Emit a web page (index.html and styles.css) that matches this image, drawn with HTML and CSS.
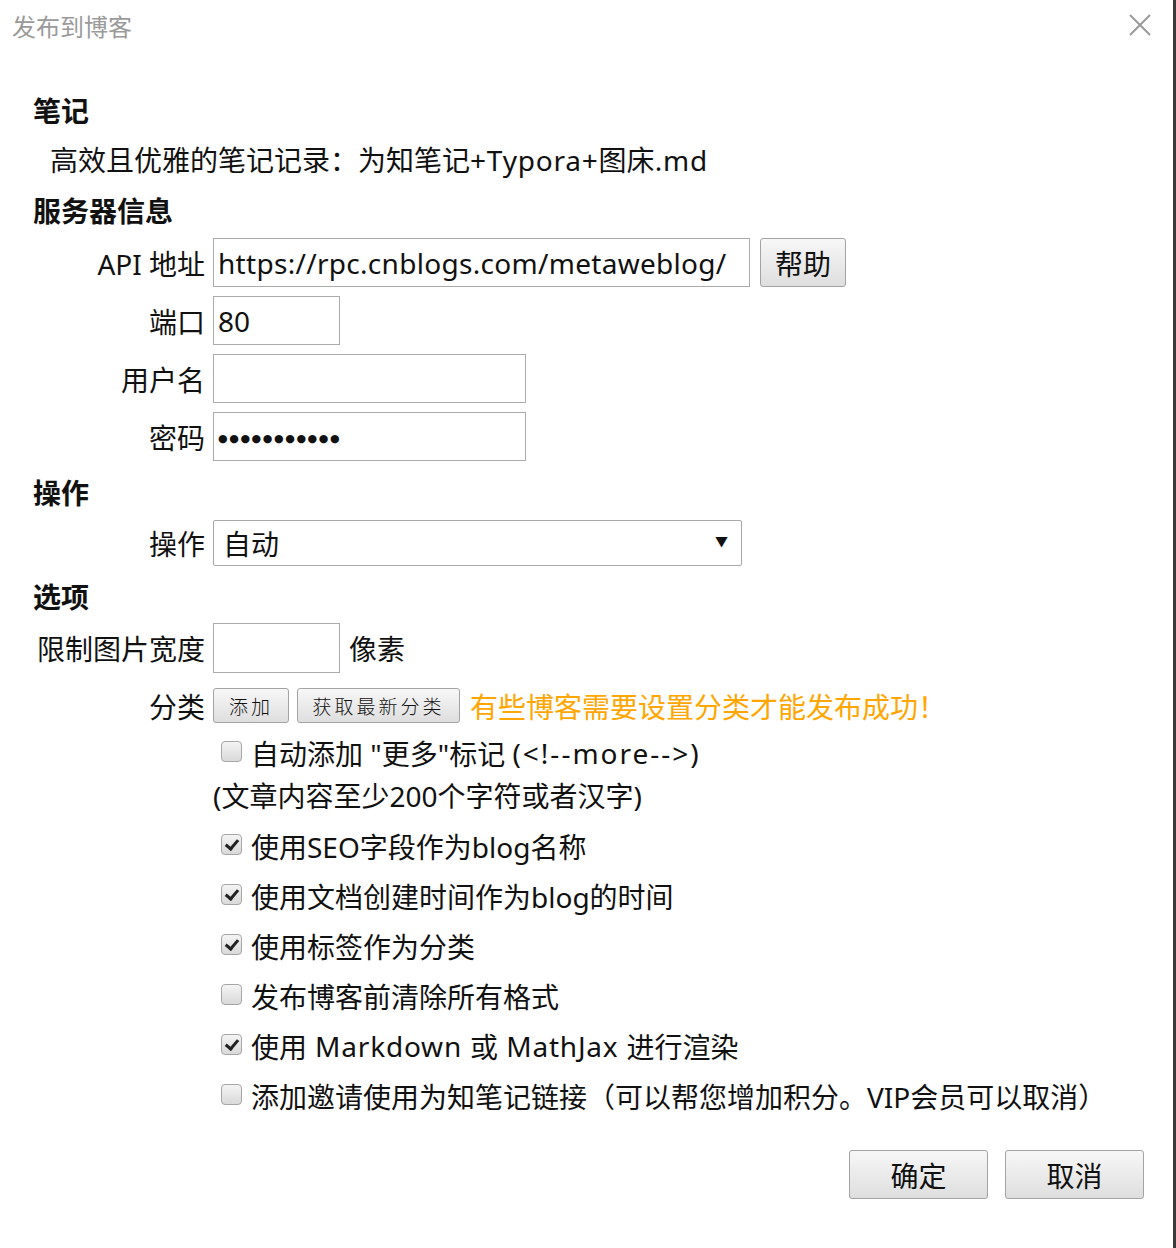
FILE: index.html
```html
<!DOCTYPE html>
<html>
<head>
  <meta charset="utf-8">
  <title>发布到博客</title>
  <link rel="stylesheet" href="styles.css">
</head>
<body>

  <div class="dialog">
    <div class="titlebar">
      <span class="title">发布到博客</span>
      <svg class="close" width="22" height="22" viewBox="0 0 22 22">
        <path d="M1 1L21 21M21 1L1 21" stroke="#999" stroke-width="2" fill="none"/>
      </svg>
    </div>

    <div class="content">
      <div class="section-title">笔记</div>
      <div class="note">高效且优雅的笔记记录：为知笔记<span class="en">+Typora+</span>图床<span class="en">.md</span></div>

      <div class="section-title">服务器信息</div>
      <div class="rows server">
        <div class="field">
          <label>API 地址</label>
          <input type="text" class="input url" value="https://rpc.cnblogs.com/metaweblog/">
          <button class="btn help">帮助</button>
        </div>
        <div class="field">
          <label>端口</label>
          <input type="text" class="input short" value="80">
        </div>
        <div class="field">
          <label>用户名</label>
          <input type="text" class="input mid" value="">
        </div>
        <div class="field">
          <label>密码</label>
          <input type="text" class="input mid pass" value="●●●●●●●●●●●">
        </div>
      </div>

      <div class="section-title op-title">操作</div>
      <div class="field select-row">
        <label>操作</label>
        <div class="select">
          <span>自动</span>
          <span class="arrow">▼</span>
        </div>
      </div>

      <div class="section-title opt-title">选项</div>
      <div class="field width-row">
        <label>限制图片宽度</label>
        <input type="text" class="input short tall" value="">
        <span class="unit">像素</span>
      </div>
      <div class="field cat-row">
        <label>分类</label>
        <button class="btn small add">添加</button>
        <button class="btn small fetch">获取最新分类</button>
        <span class="warn">有些博客需要设置分类才能发布成功！</span>
      </div>

      <div class="options">
        <div class="check first"><span class="box"></span>自动添加 "更多"标记 <span class="more">(&lt;!--more--&gt;)</span></div>
        <div class="hint">(文章内容至少200个字符或者汉字)</div>
        <div class="check"><span class="box on"></span>使用SEO字段作为blog名称</div>
        <div class="check"><span class="box on"></span>使用文档创建时间作为blog的时间</div>
        <div class="check"><span class="box on"></span>使用标签作为分类</div>
        <div class="check"><span class="box"></span>发布博客前清除所有格式</div>
        <div class="check"><span class="box on"></span>使用<span class="en"> Markdown </span>或<span class="en"> MathJax </span>进行渲染</div>
        <div class="check"><span class="box"></span>添加邀请使用为知笔记链接（可以帮您增加积分。VIP会员可以取消）</div>
      </div>

      <div class="footer">
        <button class="btn big">确定</button>
        <button class="btn big">取消</button>
      </div>
    </div>
  </div>

</body>
</html>
```

FILE: styles.css
```css
body {
  margin: 0;
  font-family: "Noto Sans", "Noto Sans CJK SC", sans-serif;
  color: #111;
  background: #fff;
}

.dialog {
  width: 1173px;
  height: 1248px;
  border-right: 3px solid #3a3a3d;
  overflow: hidden;
}

.titlebar {
  height: 50px;
  display: flex;
  align-items: center;
  justify-content: space-between;
  padding: 0 22px 0 12px;
}

.title {
  font-size: 24px;
  color: #9a9a9a;
}

.content {
  padding: 35px 0 0 33px;
  font-size: 28px;
}

.section-title {
  font-weight: bold;
  line-height: 50px;
  height: 50px;
  font-family: "Noto Sans CJK SC", sans-serif;
}

.note {
  line-height: 50px;
  height: 50px;
  padding-left: 17px;
}

.en {
  letter-spacing: 0.8px;
}

.rows {
  display: flex;
  flex-direction: column;
  gap: 9px;
}

.server {
  margin-top: 3px;
}

.field {
  display: flex;
  align-items: center;
  gap: 8px;
}

.field label {
  width: 172px;
  text-align: right;
  flex-shrink: 0;
  white-space: nowrap;
}

.input {
  box-sizing: border-box;
  height: 49px;
  border: 1px solid #ababab;
  font: inherit;
  font-size: 28px;
  padding: 0 4px;
  color: #111;
  outline: none;
}

.url {
  width: 537px;
  letter-spacing: 0.3px;
}

.short { width: 127px; }
.mid { width: 313px; }
.tall { height: 50px; }

.pass {
  font-family: "DejaVu Sans", sans-serif;
  font-size: 11px;
  letter-spacing: 1.6px;
  padding-top: 3px;
}

.btn {
  box-sizing: border-box;
  border: 1px solid #a3a3a3;
  border-radius: 3px;
  background: linear-gradient(#f7f7f7, #dedede);
  font: inherit;
  color: #111;
  padding: 0;
  cursor: pointer;
}

.help {
  width: 86px;
  height: 49px;
  margin-left: 2px;
  font-size: 28px;
}

.op-title { margin-top: 6px; }

.select-row { margin-top: 3px; }

.select {
  box-sizing: border-box;
  width: 529px;
  height: 46px;
  border: 1px solid #a8a8a8;
  border-radius: 2px;
  display: flex;
  align-items: center;
  justify-content: space-between;
  padding: 0 13px 0 9px;
}

.arrow {
  font-size: 13px;
  margin-top: -6px;
}

.opt-title { margin-top: 5px; }

.width-row { margin-top: 2px; }

.unit { margin-left: 1px; }

.cat-row {
  margin-top: 7px;
  height: 51px;
}

.small {
  height: 35px;
  font-size: 19px;
  letter-spacing: 3px;
  font-family: "Noto Sans CJK SC", sans-serif;
  font-weight: 300;
}

.add { width: 76px; }
.fetch { width: 163px; }

.warn {
  color: #ffa600;
  margin-left: 2px;
}

.options {
  padding-left: 180px;
}

.check {
  display: flex;
  align-items: center;
  height: 50px;
  padding-left: 8px;
  white-space: pre;
}

.check.first {
  height: 44px;
}

.more {
  letter-spacing: 2px;
}

.hint {
  height: 42px;
  line-height: 42px;
}

.hint + .check {
  margin-top: 4px;
}

.box {
  box-sizing: border-box;
  width: 21px;
  height: 21px;
  border: 1px solid #a6a6a6;
  border-radius: 4px;
  background: linear-gradient(#f4f4f4, #d9d9d9);
  margin-right: 9px;
  margin-top: -4px;
  position: relative;
}

.box.on::after {
  content: "";
  position: absolute;
  left: 6px;
  top: 2px;
  width: 5px;
  height: 10px;
  border: solid #222;
  border-width: 0 3px 3px 0;
  transform: rotate(40deg);
}

.footer {
  display: flex;
  justify-content: flex-end;
  gap: 17px;
  margin-top: 29px;
  padding-right: 29px;
}

.big {
  width: 139px;
  height: 49px;
  font-size: 28px;
}
```
